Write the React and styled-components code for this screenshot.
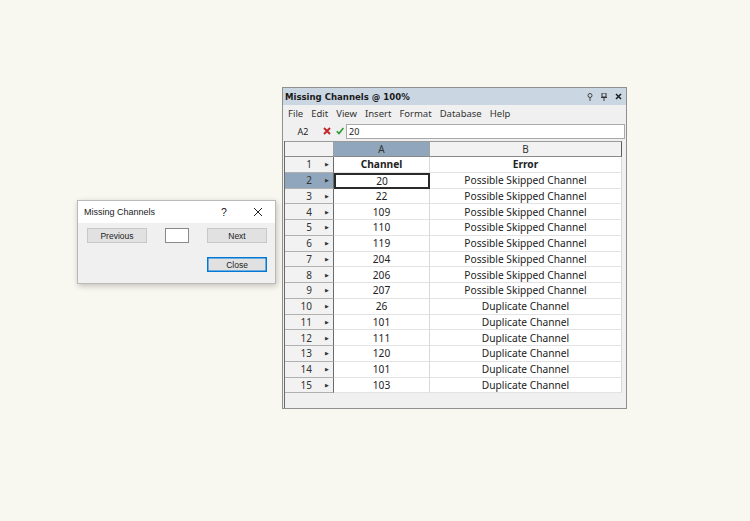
import React from 'react';
import styled, { createGlobalStyle } from 'styled-components';

const Global = createGlobalStyle`
  html, body { margin: 0; padding: 0; }
  body { background: #f8f8f0; }
`;

const Desktop = styled.div`
  position: relative;
  width: 750px;
  height: 521px;
  background: #f8f8f0;
  overflow: hidden;
  font-family: "Noto Sans", "Open Sans", sans-serif;
`;

/* ---------- dialog ---------- */

const Dialog = styled.div`
  position: absolute;
  left: 77px;
  top: 200px;
  width: 199px;
  height: 84px;
  box-sizing: border-box;
  border: 1px solid #b9b9b9;
  background: #f0f0f0;
  box-shadow: 1px 2px 6px rgba(0, 0, 0, 0.22);
  display: flex;
  flex-direction: column;
`;

const DialogTitle = styled.div`
  height: 22px;
  background: #ffffff;
  display: flex;
  align-items: center;
  padding: 0 12px 0 6px;
  font-family: "Liberation Sans", Arial, sans-serif;
  font-size: 9px;
  color: #1a1a1a;
`;

const DialogTitleText = styled.span`
  flex: 1;
`;

const HelpGlyph = styled.span`
  width: 14px;
  text-align: center;
  font-size: 10.5px;
  color: #222;
  margin-right: 22px;
`;

const DialogBody = styled.div`
  display: grid;
  grid-template-columns: 60px 24px 60px;
  grid-template-rows: 15px 15px;
  column-gap: 18px;
  row-gap: 14px;
  padding: 5px 0 0 9px;
  align-items: stretch;
`;

const DlgButton = styled.div`
  box-sizing: border-box;
  background: #e1e1e1;
  border: 1px solid ${p => (p.$default ? '#0078d7' : '#c8c8c8')};
  ${p => p.$default && 'box-shadow: inset 0 0 0 0.5px #0078d7;'}
  font-family: "Liberation Sans", Arial, sans-serif;
  font-size: 8.5px;
  color: #222;
  display: flex;
  align-items: center;
  justify-content: center;
  grid-column: ${p => p.$col || 'auto'};
`;

const DlgInput = styled.div`
  box-sizing: border-box;
  background: #fff;
  border: 1px solid #8a8a8a;
`;

/* ---------- main window ---------- */

const Window = styled.div`
  position: absolute;
  left: 282px;
  top: 87px;
  width: 345px;
  height: 322px;
  box-sizing: border-box;
  border: 1px solid #8f8f8f;
  background: #f0f0f0;
  display: flex;
  flex-direction: column;
`;

const TitleBar = styled.div`
  height: 17px;
  background: #cad6e2;
  display: flex;
  align-items: center;
  padding: 0 4px 0 2px;
`;

const WindowTitle = styled.span`
  flex: 1;
  font-family: "DejaVu Sans Condensed", "DejaVu Sans", sans-serif;
  font-stretch: condensed;
  font-weight: bold;
  font-size: 9.5px;
  color: #1a1a1a;
`;

const TitleIcons = styled.div`
  display: flex;
  gap: 8px;
  align-items: center;
`;

const MenuBar = styled.div`
  height: 17px;
  display: flex;
  align-items: center;
  gap: 8px;
  padding: 0 5px;
  font-size: 9.5px;
  color: #333;
`;

const FormulaBar = styled.div`
  height: 16px;
  display: flex;
  align-items: center;
  margin: 1px 1px 0 0;
`;

const NameBox = styled.div`
  width: 40px;
  text-align: center;
  font-size: 9px;
  color: #222;
`;

const FormulaIcons = styled.div`
  display: flex;
  align-items: center;
  gap: 5px;
  width: 23px;
`;

const FormulaInput = styled.div`
  flex: 1;
  height: 15px;
  box-sizing: border-box;
  background: #fff;
  border: 1px solid #a9a9a9;
  font-size: 9px;
  line-height: 13px;
  padding-left: 2px;
  color: #222;
`;

const GridArea = styled.div`
  flex: 1;
  margin: 2px 0 0 1px;
  display: flex;
  flex-direction: column;
`;

const Grid = styled.div`
  display: grid;
  grid-template-columns: 49px 96px 192px;
  grid-template-rows: 16px repeat(15, 15.75px);
  width: 337px;
  border-left: 1px solid #6b6b6b;
  box-sizing: border-box;
`;

const ColHead = styled.div`
  box-sizing: border-box;
  background: ${p => (p.$sel ? '#8fa6bc' : '#f2f2f2')};
  border-top: 1px solid #9a9a9a;
  border-right: 1px solid ${p => (p.$last ? '#5a5a5a' : '#a0a0a0')};
  border-bottom: 1px solid #8a8a8a;
  font-size: 10px;
  color: #333;
  display: flex;
  align-items: center;
  justify-content: center;
`;

const RowHead = styled.div`
  box-sizing: border-box;
  background: ${p => (p.$sel ? '#8fa6bc' : '#f2f2f2')};
  border-right: 1px solid #6b6b6b;
  border-bottom: 1px solid #b0b0b0;
  font-size: 10px;
  color: #333;
  display: flex;
  align-items: center;
  padding-right: 4px;
`;

const RowNum = styled.span`
  flex: 1;
  text-align: right;
  padding-right: 13px;
`;

const RowArrow = styled.span`
  font-size: 4.5px;
  color: #333;
`;

const Cell = styled.div`
  box-sizing: border-box;
  background: #fff;
  border-right: 1px solid #d9d9d9;
  border-bottom: 1px solid #e3e3e3;
  font-size: 10.2px;
  font-weight: ${p => (p.$bold ? 700 : 400)};
  color: #222;
  display: flex;
  align-items: center;
  justify-content: center;
  white-space: nowrap;
  ${p => p.$active && 'outline: 2px solid #2a2a2a; outline-offset: -2px; border: none;'}
`;

const GridFill = styled.div`
  flex: 1;
  border-left: 1px solid #6b6b6b;
`;

const rows = [
  ['Channel', 'Error', true],
  ['20', 'Possible Skipped Channel'],
  ['22', 'Possible Skipped Channel'],
  ['109', 'Possible Skipped Channel'],
  ['110', 'Possible Skipped Channel'],
  ['119', 'Possible Skipped Channel'],
  ['204', 'Possible Skipped Channel'],
  ['206', 'Possible Skipped Channel'],
  ['207', 'Possible Skipped Channel'],
  ['26', 'Duplicate Channel'],
  ['101', 'Duplicate Channel'],
  ['111', 'Duplicate Channel'],
  ['120', 'Duplicate Channel'],
  ['101', 'Duplicate Channel'],
  ['103', 'Duplicate Channel'],
];

const PinIcon = () => (
  <svg width="6" height="8" viewBox="0 0 6 8">
    <rect x="1" y="0" width="4" height="4" fill="none" stroke="#333" strokeWidth="1" />
    <line x1="0" y1="4.5" x2="6" y2="4.5" stroke="#333" strokeWidth="1" />
    <line x1="3" y1="4.5" x2="3" y2="8" stroke="#333" strokeWidth="1" />
  </svg>
);

const HelpPin = () => (
  <svg width="6" height="8" viewBox="0 0 6 8">
    <circle cx="3" cy="2.5" r="2" fill="none" stroke="#444" strokeWidth="1" />
    <line x1="3" y1="4.5" x2="3" y2="8" stroke="#444" strokeWidth="1" />
  </svg>
);

const CloseX = () => (
  <svg width="7" height="7" viewBox="0 0 7 7">
    <path d="M1 1L6 6M6 1L1 6" stroke="#222" strokeWidth="1.6" />
  </svg>
);

export default function App() {
  return (
    <Desktop>
      <Global />

      <Dialog>
        <DialogTitle>
          <DialogTitleText>Missing Channels</DialogTitleText>
          <HelpGlyph>?</HelpGlyph>
          <svg width="10" height="10" viewBox="0 0 10 10">
            <path d="M1 1L9 9M9 1L1 9" stroke="#222" strokeWidth="1" />
          </svg>
        </DialogTitle>
        <DialogBody>
          <DlgButton>Previous</DlgButton>
          <DlgInput />
          <DlgButton>Next</DlgButton>
          <DlgButton $col="3" $default>Close</DlgButton>
        </DialogBody>
      </Dialog>

      <Window>
        <TitleBar>
          <WindowTitle>Missing Channels @ 100%</WindowTitle>
          <TitleIcons>
            <HelpPin />
            <PinIcon />
            <CloseX />
          </TitleIcons>
        </TitleBar>
        <MenuBar>
          {['File', 'Edit', 'View', 'Insert', 'Format', 'Database', 'Help'].map(m => (
            <span key={m}>{m}</span>
          ))}
        </MenuBar>
        <FormulaBar>
          <NameBox>A2</NameBox>
          <FormulaIcons>
            <svg width="8" height="8" viewBox="0 0 8 8">
              <path d="M1 1L7 7M7 1L1 7" stroke="#c0282d" strokeWidth="2" />
            </svg>
            <svg width="8" height="8" viewBox="0 0 8 8">
              <path d="M0.8 4.2L3 6.6L7.4 1" stroke="#2c9a2c" strokeWidth="1.6" fill="none" />
            </svg>
          </FormulaIcons>
          <FormulaInput>20</FormulaInput>
        </FormulaBar>
        <GridArea>
          <Grid>
            <ColHead />
            <ColHead $sel>A</ColHead>
            <ColHead $last>B</ColHead>
            {rows.map(([a, b, bold], i) => (
              <React.Fragment key={i}>
                <RowHead $sel={i === 1}>
                  <RowNum>{i + 1}</RowNum>
                  <RowArrow>▶</RowArrow>
                </RowHead>
                <Cell $bold={bold} $active={i === 1}>{a}</Cell>
                <Cell $bold={bold}>{b}</Cell>
              </React.Fragment>
            ))}
          </Grid>
          <GridFill />
        </GridArea>
      </Window>
    </Desktop>
  );
}
